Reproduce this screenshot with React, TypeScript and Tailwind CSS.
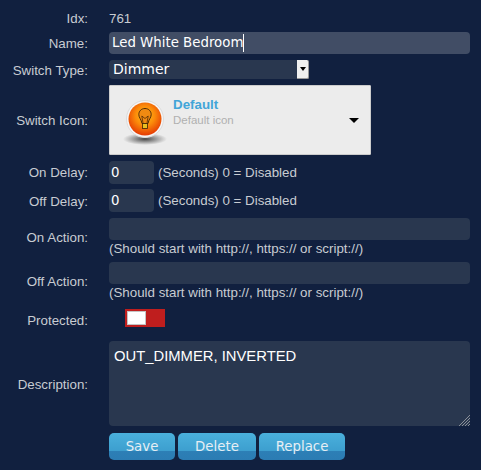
const labelClass = "w-[88px] shrink-0 text-right font-['Liberation_Sans',sans-serif] text-[13.333px] text-[#c8ccd2]";
const noteClass = "font-['Liberation_Sans',sans-serif] text-[13.333px] text-[#c8ccd2]";

const Row = ({
  label,
  className,
  labelPad = "pt-[2px]",
  children,
}: {
  label: string;
  className: string;
  labelPad?: string;
  children: React.ReactNode;
}) => {
  return (
    <div className={`flex items-center gap-[21px] ${className}`}>
      <div className={`${labelClass} ${labelPad}`}>{label}</div>
      {children}
    </div>
  );
};

const BulbIcon = () => {
  return (
    <svg className="mt-[8px]" width="44" height="50" viewBox="0 0 44 50">
      <defs>
        <radialGradient id="glow" cx="50%" cy="40%" r="60%">
          <stop offset="0%" stopColor="#ffc21a" />
          <stop offset="50%" stopColor="#fb8a0a" />
          <stop offset="100%" stopColor="#e53a03" />
        </radialGradient>
        <radialGradient id="shadow" cx="50%" cy="50%" r="50%">
          <stop offset="0%" stopColor="#444" />
          <stop offset="100%" stopColor="#555" stopOpacity="0" />
        </radialGradient>
      </defs>
      <ellipse cx="22" cy="40" rx="22" ry="6" fill="url(#shadow)" />
      <circle cx="22" cy="20" r="18.5" fill="#f6f6f6" stroke="#dcdcdc" />
      <circle cx="22" cy="20" r="16.500" fill="url(#glow)" />
      <path d="M22 9.500c-3.800 0-6.200 2.800-6.200 6 0 3.200 2.600 5 3.200 9h6c.6-4 3.200-5.800 3.200-9 0-3.200-2.400-6-6.200-6z" fill="#f08a12" stroke="#3f2005" strokeWidth="0.9" />
      <path d="M20 24l-1.200-7 3.200 2.500 3.200-2.500-1.200 7" fill="none" stroke="#3f2005" strokeWidth="0.7" />
      <rect x="19.500" y="24.500" width="5" height="5" fill="#e8c020" stroke="#3f2005" strokeWidth="0.8" />
    </svg>
  );
};

const App = () => {
  return (
    <div className="h-[470px] w-[481px] overflow-hidden bg-[#11203f] font-['DejaVu_Sans',sans-serif]">
      <Row label="Idx:" labelPad="pt-0" className="box-content h-[15px] pt-[11px]">
        <span className={noteClass}>761</span>
      </Row>

      <Row label="Name:" className="mt-[6px] h-[22px]">
        <div className="flex h-[22px] w-[361px] items-center rounded-[4px] bg-[#414d65] pl-[3px] text-[13.333px] text-white">
          Led White Bedroom
          <span className="h-[18px] w-px bg-white" />
        </div>
      </Row>

      <Row label="Switch Type:" className="mt-[6px] h-[19px]">
        <div className="flex h-[19px] w-[200px] items-center rounded-[4px] bg-[#29374f] pl-[4px] text-[14px] text-white">
          <span className="flex-1">Dimmer</span>
          <span className="flex h-[19px] w-[12px] items-center justify-center rounded-r-[2px] border-r border-b border-[#9a9a9a] bg-[#f0f0f0]">
            <span className="h-0 w-0 border-x-[3px] border-t-[4px] border-x-transparent border-t-black" />
          </span>
        </div>
      </Row>

      <Row label="Switch Icon:" className="mt-[6px] h-[70px]">
        <div className="flex h-[70px] w-[262px] items-center rounded-[1px] border border-[#cccccc] bg-[#ececec] pl-[13px]">
          <BulbIcon />
          <div className="mb-[16px] ml-[6px] flex-1 font-['Liberation_Sans',sans-serif]">
            <div className="text-[13.333px] leading-[15px] font-bold text-[#42a5d8]">Default</div>
            <div className="mt-[1px] text-[11.500px] leading-[14px] text-[#b0b0b0]">Default icon</div>
          </div>
          <span className="mr-[11px] h-0 w-0 border-x-[5px] border-t-[5px] border-x-transparent border-t-black" />
        </div>
      </Row>

      <Row label="On Delay:" labelPad="pt-0" className="mt-[6px] h-[23px]">
        <div className="flex items-center gap-[4px]">
          <div className="flex h-[23px] w-[45px] items-center rounded-[4px] bg-[#29374f] pl-[2px] text-[13.333px] text-white">0</div>
          <span className={noteClass}>(Seconds) 0 = Disabled</span>
        </div>
      </Row>

      <Row label="Off Delay:" className="mt-[5px] h-[23px]">
        <div className="flex items-center gap-[4px]">
          <div className="flex h-[23px] w-[45px] items-center rounded-[4px] bg-[#29374f] pl-[2px] text-[13.333px] text-white">0</div>
          <span className={noteClass}>(Seconds) 0 = Disabled</span>
        </div>
      </Row>

      <Row label="On Action:" className="mt-[6px] h-[38px]">
        <div>
          <div className="h-[22px] w-[361px] rounded-[4px] bg-[#29374f]" />
          <div className={`mt-[1px] h-[15px] leading-[15px] ${noteClass}`}>(Should start with http://, https:// or script://)</div>
        </div>
      </Row>

      <Row label="Off Action:" className="mt-[6px] h-[38px]">
        <div>
          <div className="h-[22px] w-[361px] rounded-[4px] bg-[#29374f]" />
          <div className={`mt-[1px] h-[15px] leading-[15px] ${noteClass}`}>(Should start with http://, https:// or script://)</div>
        </div>
      </Row>

      <Row label="Protected:" labelPad="pt-[6px]" className="mt-[9px] h-[18px]">
        <div className="ml-[16px] flex h-[18px] w-[40px] items-center bg-[#bf1e1e] pl-[2px]">
          <span className="h-[14px] w-[19px] border border-[#c4c4c4] bg-white" />
        </div>
      </Row>

      <Row label="Description:" className="mt-[14px] h-[85px]">
        <div className="relative h-[85px] w-[361px] rounded-[4px] bg-[#29374f] pt-[5px] pl-[5px] font-['Liberation_Sans',sans-serif] text-[14.800px] leading-[20px] text-white">
          OUT_DIMMER, INVERTED
          <svg className="absolute right-0 bottom-0" width="11" height="11" viewBox="0 0 11 11">
            <path d="M11 0L0 11M11 3L3 11M11 6L6 11M11 9L9 11" stroke="#8a8f98" strokeWidth="1" />
          </svg>
        </div>
      </Row>

      <div className="mt-[7px] ml-[109px] flex gap-[3px]">
        {[
          { label: "Save", width: "w-[66px]" },
          { label: "Delete", width: "w-[78px]" },
          { label: "Replace", width: "w-[86px]" },
        ].map((b) => (
          <button
            key={b.label}
            className={`h-[27px] rounded-[5px] bg-[linear-gradient(#4ab0dc_0%,#3d9fcf_65%,#2d7fb6_66%,#2b7cb3_100%)] text-[13.333px] text-[#e6eef4] ${b.width}`}
          >
            {b.label}
          </button>
        ))}
      </div>
    </div>
  );
};

export default App;
